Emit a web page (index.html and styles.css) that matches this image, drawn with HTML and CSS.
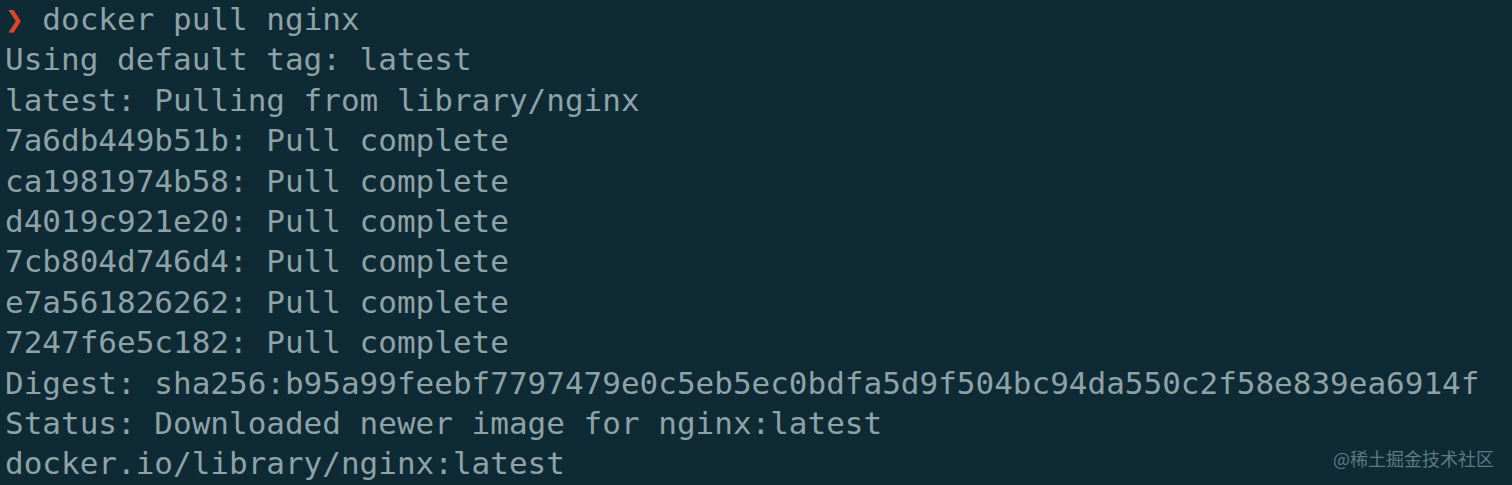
FILE: index.html
```html
<!DOCTYPE html>
<html lang="en">
<head>
    <meta charset="UTF-8">
    <title>docker pull nginx</title>
    <link rel="stylesheet" href="styles.css">
</head>
<body>
    <div class="terminal">
        <div class="line"><span class="prompt">❯</span> docker pull nginx</div>
        <div class="line">Using default tag: latest</div>
        <div class="line">latest: Pulling from library/nginx</div>
        <div class="line">7a6db449b51b: Pull complete</div>
        <div class="line">ca1981974b58: Pull complete</div>
        <div class="line">d4019c921e20: Pull complete</div>
        <div class="line">7cb804d746d4: Pull complete</div>
        <div class="line">e7a561826262: Pull complete</div>
        <div class="line">7247f6e5c182: Pull complete</div>
        <div class="line">Digest: sha256:b95a99feebf7797479e0c5eb5ec0bdfa5d9f504bc94da550c2f58e839ea6914f</div>
        <div class="line">Status: Downloaded newer image for nginx:latest</div>
        <div class="line">docker.io/library/nginx:latest</div>
    </div>
    <div class="watermark">@稀土掘金技术社区</div>
</body>
</html>
```

FILE: styles.css
```css
html, body {
    margin: 0;
    height: 100%;
}

body {
    background-color: #0e2a35;
    position: relative;
    overflow: hidden;
}

.terminal {
    font-family: "DejaVu Sans Mono", monospace;
    font-size: 31px;
    line-height: 40.4px;
    color: #8fa2a6;
    padding-left: 5px;
    margin-top: -1px;
}

.line {
    white-space: pre;
}

.prompt {
    color: #e0452c;
}

.watermark {
    position: absolute;
    right: 18px;
    bottom: 15px;
    font-family: "Noto Sans CJK SC", "Noto Sans", sans-serif;
    font-size: 18px;
    line-height: 24px;
    color: #5e7980;
}
```
